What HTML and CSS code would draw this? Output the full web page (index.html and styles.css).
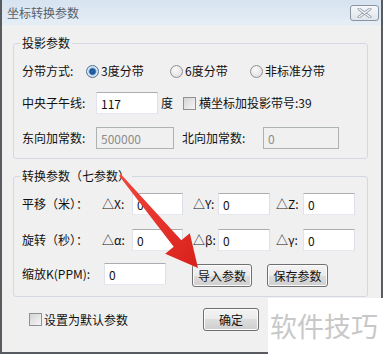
FILE: index.html
```html
<!DOCTYPE html>
<html lang="zh-CN">
<head>
    <meta charset="UTF-8">
    <title>坐标转换参数</title>
    <link rel="stylesheet" href="styles.css">
</head>
<body>
    <div class="window">
        <div class="titlebar">
            <span class="title">坐标转换参数</span>
            <span class="close">
                <svg width="15" height="10" viewBox="0 0 15 10">
                    <path d="M2 1 L13 9 M13 1 L2 9" stroke="#9aa3ad" stroke-width="3" stroke-linecap="round"/>
                    <path d="M2 1 L13 9 M13 1 L2 9" stroke="#f4f6f8" stroke-width="1.2" stroke-linecap="round"/>
                </svg>
            </span>
        </div>

        <div class="content">
            <fieldset class="group">
                <legend>投影参数</legend>
                <div class="row first">
                    <span class="label w64">分带方式:</span>
                    <label class="opt w84"><span class="radio checked"></span>3度分带</label>
                    <label class="opt w80"><span class="radio"></span>6度分带</label>
                    <label class="opt"><span class="radio"></span>非标准分带</label>
                </div>
                <div class="row">
                    <span class="label w74">中央子午线:</span>
                    <input class="field w62" value="117">
                    <span class="unit">度</span>
                    <label class="check"><span class="box"></span>横坐标加投影带号:39</label>
                </div>
                <div class="row third">
                    <span class="label w74">东向加常数:</span>
                    <input class="field w78" value="500000" disabled>
                    <span class="label w81 gap8">北向加常数:</span>
                    <input class="field w76" value="0" disabled>
                </div>
            </fieldset>

            <fieldset class="group second">
                <legend>转换参数（七参数）</legend>
                <div class="row first">
                    <span class="label w80">平移（米）：</span>
                    <span class="delta w30">△X:</span>
                    <input class="field w51" value="0">
                    <span class="delta w25 gap10">△Y:</span>
                    <input class="field w52" value="0">
                    <span class="delta w27 gap6">△Z:</span>
                    <input class="field w52" value="0">
                </div>
                <div class="row rot">
                    <span class="label w80">旋转（秒）：</span>
                    <span class="delta w30">△α:</span>
                    <input class="field w51" value="0">
                    <span class="delta w25 gap10">△β:</span>
                    <input class="field w52" value="0">
                    <span class="delta w27 gap6">△γ:</span>
                    <input class="field w52" value="0">
                </div>
                <div class="row scale">
                    <span class="label w82">缩放K(PPM):</span>
                    <input class="field w62" value="0">
                    <button class="btn import">导入参数</button>
                    <button class="btn save">保存参数</button>
                </div>
            </fieldset>

            <div class="footer">
                <label class="check"><span class="box"></span>设置为默认参数</label>
                <button class="btn ok">确定</button>
            </div>
        </div>
    </div>

    <div class="watermark">软件技巧</div>

    <svg class="arrow" width="383" height="356" viewBox="0 0 383 356">
        <defs>
            <linearGradient id="red" x1="0" y1="0" x2="1" y2="1">
                <stop offset="0" stop-color="#f0463c"/>
                <stop offset="1" stop-color="#d9201b"/>
            </linearGradient>
        </defs>
        <polygon fill="url(#red)"
            points="120.9,174.2 181.3,240.3 189.8,233.2 198,268 165.2,253.8 173.7,246.7 119.1,175.8"/>
    </svg>
</body>
</html>
```

FILE: styles.css
```css
body {
    margin: 0;
    background: #fff;
    font-family: "Noto Sans CJK SC", "Liberation Sans", sans-serif;
    font-size: 12px;
    color: #111;
}

.window {
    width: 383px;
    height: 354px;
    box-sizing: border-box;
    border: 2px solid #585c61;
    border-top: none;
    background: #f0f0f0;
}

.titlebar {
    height: 25px;
    display: flex;
    align-items: center;
    justify-content: space-between;
    padding: 0 2px 0 5px;
    background: linear-gradient(#d7e3f0, #e6edf5);
}
.title {
    color: #54616c;
    line-height: 14px;
}
.close {
    width: 27px;
    height: 14px;
    display: flex;
    align-items: center;
    justify-content: center;
    border: 1px solid #8795a3;
    border-radius: 3px;
    background: linear-gradient(#f6f8fa, #dfe5eb);
}

.content {
    padding: 11px 0 0 11px;
}

.group {
    width: 355px;
    box-sizing: border-box;
    margin: 0;
    padding: 0 0 9px 8px;
    border: 1px solid #d3d9de;
    border-radius: 3px;
}
.group legend {
    padding: 0 2px;
    margin-left: -2px;
    line-height: 14px;
}
.group.second {
    margin-top: 10px;
}

.row {
    display: flex;
    align-items: center;
    height: 22px;
    margin-top: 10px;
    line-height: 14px;
    white-space: nowrap;
}
.row.third { margin-top: 13px; }
.row.rot { margin-top: 14px; }
.row.scale {
    margin-top: 12px;
    height: 24px;
    align-items: flex-start;
}
.row.scale .label { align-self: center; margin-top: -2px; }

.label { flex: none; }
.w64 { width: 64px; }
.w74 { width: 74px; }
.w80 { width: 80px; }
.w81 { width: 81px; }
.w82 { width: 82px; }
.gap6 { margin-left: 6px; }
.gap8 { margin-left: 8px; }
.gap10 { margin-left: 10px; }

.opt {
    display: flex;
    align-items: center;
    flex: none;
}
.w84 { width: 84px; }
.w80.opt { width: 80px; }

.radio {
    width: 11px;
    height: 11px;
    border-radius: 50%;
    border: 1px solid #8f9194;
    background: radial-gradient(circle at 40% 35%, #fafafa, #d9d9d9);
    margin-right: 2px;
    box-sizing: content-box;
}
.radio.checked {
    background: radial-gradient(circle, #2c6bb0 0, #1a4f8e 2.5px, #78aee0 3.6px, #e8eef5 4.5px, #d6dbe0 6px);
    border-color: #4b6f95;
}

.check {
    display: flex;
    align-items: center;
    margin-left: 10px;
}
.box {
    width: 11px;
    height: 11px;
    border: 1px solid #8f9194;
    background: linear-gradient(135deg, #d4d4d4, #f6f6f6);
    margin-right: 3px;
}
.unit { margin-left: 3px; }

.field {
    flex: none;
    height: 22px;
    box-sizing: border-box;
    padding: 0 4px;
    margin: 0;
    border: 1px solid;
    border-color: #abadb3 #dbdfe6 #e3e9ef #e2e3ea;
    background: #fff;
    font: inherit;
    color: #111;
    outline: none;
}
.field:disabled {
    background: #f0f0f0;
    border-color: #adb2b5;
    color: #8c8c8c;
}
.w51 { width: 51px; }
.w52 { width: 52px; }
.w62 { width: 62px; }
.w76 { width: 76px; }
.w78 { width: 78px; }

.delta { flex: none; }
.w25 { width: 25px; }
.w27 { width: 27px; }
.w30 { width: 30px; }

.btn {
    height: 23px;
    padding: 0;
    margin-top: 1px;
    border: 1px solid #707070;
    border-radius: 3px;
    background: linear-gradient(#f3f3f3 0, #ebebeb 50%, #dddddd 50%, #cfcfcf 100%);
    font: inherit;
    color: #111;
    box-shadow: inset 0 0 0 1px #fcfcfc;
}
.btn.import { width: 60px; margin-left: 26px; }
.btn.save { width: 61px; margin-left: 15px; }

.footer {
    display: flex;
    align-items: center;
    height: 23px;
    margin-top: 11px;
    padding-left: 5px;
    white-space: nowrap;
}
.footer .check { margin-left: 11px; }
.footer .box { margin-right: 2px; }
.btn.ok {
    width: 56px;
    margin: 0 0 0 75px;
}

.watermark {
    position: absolute;
    left: 268px;
    top: 298px;
    width: 115px;
    height: 58px;
    box-sizing: border-box;
    padding: 0 0 4px 2px;
    display: flex;
    align-items: center;
    background: #fff;
    color: #c8c8c8;
    font-size: 27px;
}

.arrow {
    position: absolute;
    left: 0;
    top: 0;
    pointer-events: none;
}
```
